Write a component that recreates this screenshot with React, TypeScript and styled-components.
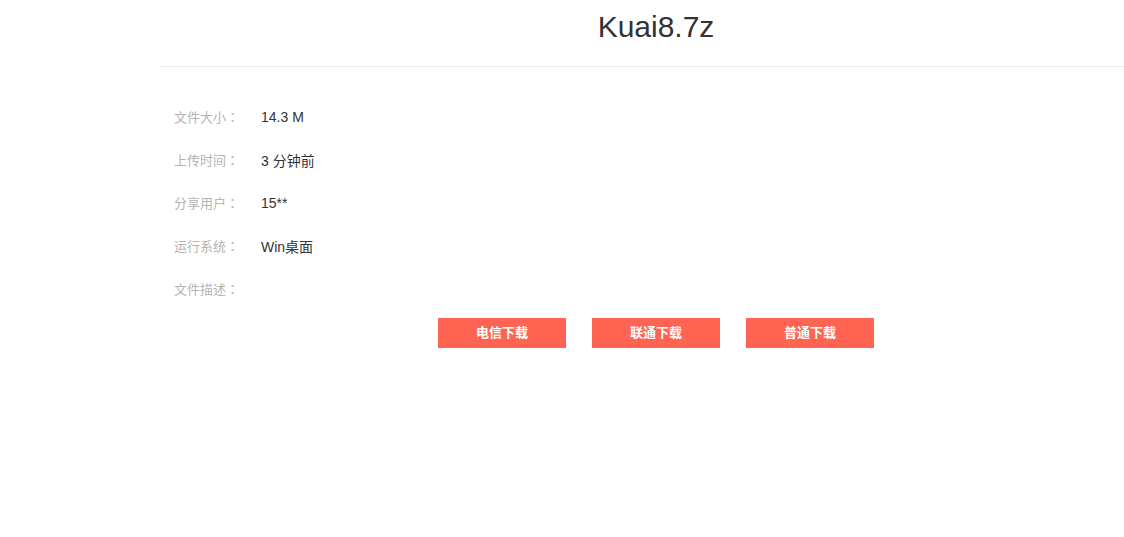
import styled, { createGlobalStyle } from "styled-components";

const GlobalStyle = createGlobalStyle`
  html, body {
    margin: 0;
    padding: 0;
    overflow-x: hidden;
    background: #fff;
    font-family: "Liberation Sans", Arial, "Noto Sans CJK SC", sans-serif;
  }
`;

const info = [
  { label: "文件大小", value: "14.3 M" },
  { label: "上传时间", value: "3 分钟前" },
  { label: "分享用户", value: "15**" },
  { label: "运行系统", value: "Win桌面" },
  { label: "文件描述", value: "" },
];

const buttons = ["电信下载", "联通下载", "普通下载"];

export default function App() {
  return (
    <>
      <GlobalStyle />
      <Page>
        <Header>
          <Title>Kuai8.7z</Title>
        </Header>
        <InfoList>
          {info.map((row) => (
            <InfoRow key={row.label}>
              <Label>
                {row.label}
                <Colon>：</Colon>
              </Label>
              <Value>{row.value}</Value>
            </InfoRow>
          ))}
        </InfoList>
        <ButtonRow>
          {buttons.map((b) => (
            <DownloadButton key={b}>{b}</DownloadButton>
          ))}
        </ButtonRow>
      </Page>
    </>
  );
}

const Page = styled.div`
  margin-left: 160px;
  width: 992px;
`;

const Header = styled.div`
  height: 66px;
  border-bottom: 1px solid #eeeeee;
  text-align: center;
`;

const Title = styled.h1`
  margin: 0;
  font-size: 30px;
  font-weight: normal;
  line-height: 54px;
  color: #333;
`;

const InfoList = styled.div`
  margin-top: 28px;
  padding-left: 14px;
`;

const InfoRow = styled.div`
  display: flex;
  align-items: center;
  height: 43px;
`;

const Label = styled.span`
  width: 87px;
  font-size: 13px;
  color: #b4b4b4;
  font-family: "Noto Sans CJK SC", sans-serif;
`;

const Colon = styled.span`
  font-family: "Noto Sans CJK JP", "Noto Sans CJK SC", sans-serif;
`;

const Value = styled.span`
  font-size: 14px;
  color: #333;
  font-family: "Liberation Sans", "Noto Sans CJK SC", sans-serif;
`;

const ButtonRow = styled.div`
  display: flex;
  justify-content: center;
  gap: 26px;
  margin-top: 8px;
`;

const DownloadButton = styled.button`
  width: 128px;
  height: 30px;
  border: none;
  padding: 0 0 3px;
  background: #ff6452;
  box-shadow: 0 2px 0 #ddd;
  color: #fff;
  font-size: 13px;
  font-weight: bold;
  font-family: "Noto Sans CJK SC", sans-serif;
  cursor: pointer;
`;
